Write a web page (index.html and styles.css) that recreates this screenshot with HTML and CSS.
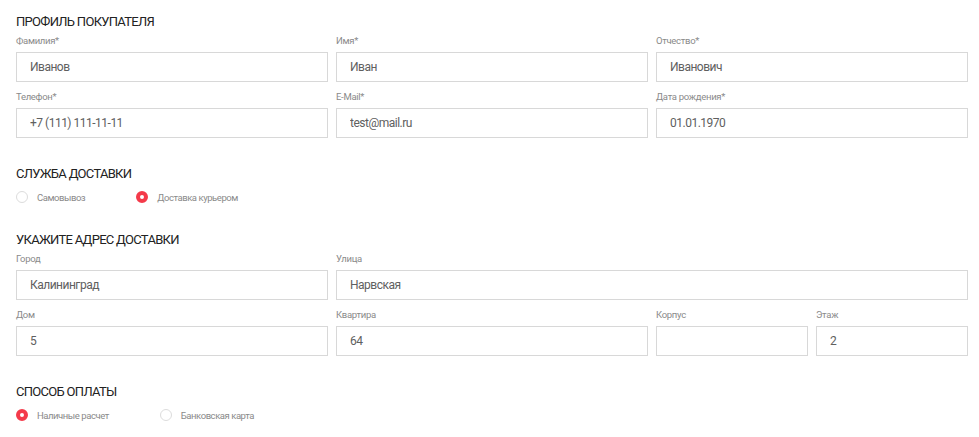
FILE: index.html
```html
<!DOCTYPE html>
<html lang="ru">
<head>
  <meta charset="UTF-8">
  <title>Оформление заказа</title>
  <link rel="stylesheet" href="styles.css">
</head>
<body>
  <div class="checkout">

    <!-- Профиль -->
    <section class="block">
      <h2>Профиль покупателя</h2>
      <div class="fields">
        <label class="field span-2">
          <span class="field-label">Фамилия*</span>
          <input type="text" value="Иванов">
        </label>
        <label class="field span-2">
          <span class="field-label">Имя*</span>
          <input type="text" value="Иван">
        </label>
        <label class="field span-2">
          <span class="field-label">Отчество*</span>
          <input type="text" value="Иванович">
        </label>
        <label class="field span-2">
          <span class="field-label">Телефон*</span>
          <input type="text" value="+7 (111) 111-11-11">
        </label>
        <label class="field span-2">
          <span class="field-label">E-Mail*</span>
          <input type="text" value="test@mail.ru">
        </label>
        <label class="field span-2">
          <span class="field-label">Дата рождения*</span>
          <input type="text" value="01.01.1970">
        </label>
      </div>
    </section>

    <!-- Доставка -->
    <section class="block">
      <h2>Служба доставки</h2>
      <div class="radios">
        <label class="radio">
          <input type="radio" name="delivery">
          <span class="radio-mark"></span>
          <span>Самовывоз</span>
        </label>
        <label class="radio">
          <input type="radio" name="delivery" checked>
          <span class="radio-mark"></span>
          <span>Доставка курьером</span>
        </label>
      </div>
    </section>

    <!-- Адрес -->
    <section class="block">
      <h2>Укажите адрес доставки</h2>
      <div class="fields">
        <label class="field span-2">
          <span class="field-label">Город</span>
          <input type="text" value="Калининград">
        </label>
        <label class="field span-4">
          <span class="field-label">Улица</span>
          <input type="text" value="Нарвская">
        </label>
        <label class="field span-2">
          <span class="field-label">Дом</span>
          <input type="text" value="5">
        </label>
        <label class="field span-2">
          <span class="field-label">Квартира</span>
          <input type="text" value="64">
        </label>
        <label class="field">
          <span class="field-label">Корпус</span>
          <input type="text" value="">
        </label>
        <label class="field">
          <span class="field-label">Этаж</span>
          <input type="text" value="2">
        </label>
      </div>
    </section>

    <!-- Оплата -->
    <section class="block">
      <h2>Способ оплаты</h2>
      <div class="radios">
        <label class="radio">
          <input type="radio" name="payment" checked>
          <span class="radio-mark"></span>
          <span>Наличные расчет</span>
        </label>
        <label class="radio">
          <input type="radio" name="payment">
          <span class="radio-mark"></span>
          <span>Банковская карта</span>
        </label>
      </div>
    </section>

  </div>
</body>
</html>
```

FILE: styles.css
```css
* {
  box-sizing: border-box;
}

body {
  margin: 0;
  background: #fff;
  font-family: Roboto, "Liberation Sans", sans-serif;
  color: #333;
}

.checkout {
  width: 952px;
  margin-left: 16px;
  padding-top: 14px;
}

.block + .block {
  margin-top: 28px;
}

h2 {
  margin: 0 0 4px;
  font-size: 13px;
  line-height: 16px;
  font-weight: 400;
  letter-spacing: -0.7px;
  text-transform: uppercase;
  color: #222;
}

.fields {
  display: grid;
  grid-template-columns: repeat(6, 1fr);
  gap: 8px;
}

.field {
  display: flex;
  flex-direction: column;
  grid-column: span 1;
}

.span-2 {
  grid-column: span 2;
}

.span-4 {
  grid-column: span 4;
}

.field-label {
  font-size: 9.5px;
  line-height: 13px;
  letter-spacing: -0.3px;
  color: #8a8a8a;
  margin-bottom: 5px;
}

.field input {
  width: 100%;
  height: 30px;
  padding: 0 13px;
  border: 1px solid #d8d8d8;
  border-radius: 0;
  font-family: inherit;
  font-size: 12px;
  letter-spacing: -0.5px;
  color: #606060;
  outline: none;
}

.radios {
  display: flex;
  margin-top: 8px;
}

.radio {
  display: flex;
  align-items: center;
  height: 14px;
  margin-right: 51px;
  font-size: 9.5px;
  letter-spacing: -0.45px;
  color: #8a8a8a;
  cursor: pointer;
}

.radio input {
  display: none;
}

.radio-mark {
  width: 12px;
  height: 12px;
  margin-right: 9px;
  border: 1px solid #dcdcdc;
  border-radius: 50%;
  background: #fff;
}

.radio input:checked + .radio-mark {
  border: 4px solid #f43a4a;
}
```
